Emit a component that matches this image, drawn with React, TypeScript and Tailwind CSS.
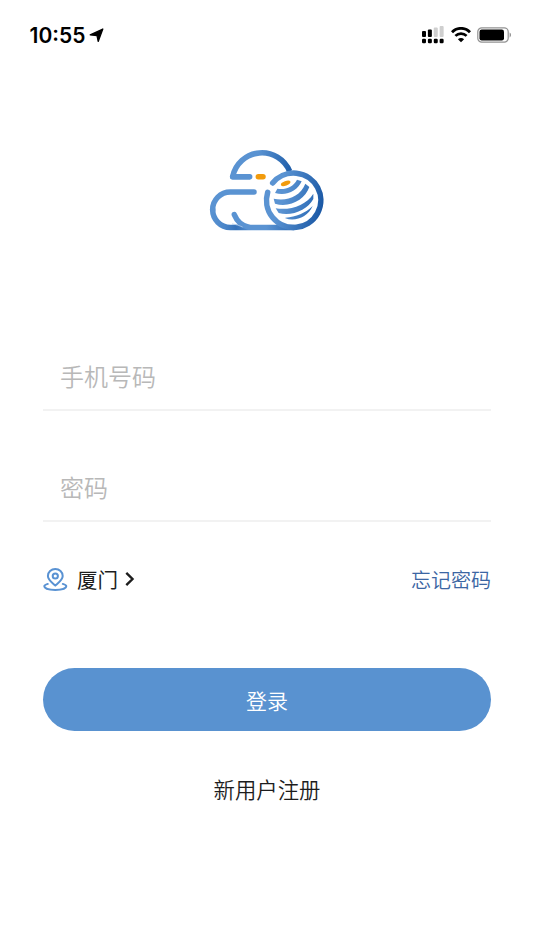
import { useState } from 'react';

const CELL_BARS = [
  { x: 0, y: 6, height: 7, color: '#000' },
  { x: 6, y: 4.5, height: 8.5, color: '#000' },
  { x: 12, y: 2.5, height: 10.5, color: '#cfcfcf' },
  { x: 18, y: 1, height: 12, color: '#cfcfcf' },
];

function StatusBar() {
  return (
    <div className="flex h-[70px] items-center justify-between pr-[22px] pl-[29.500px] text-black">
      <div className="flex items-center gap-[4px] pt-px">
        <span className="font-['Inter','Liberation_Sans',sans-serif] text-[21px] leading-none font-semibold">
          10:55
        </span>
        <svg width="15" height="15" viewBox="0 0 15 15">
          <path d="M13.800 1 9.200 13.400 8 7.600 1.200 6.900Z" fill="#000" stroke="#000" strokeWidth="1.300" strokeLinejoin="round" />
        </svg>
      </div>
      <div className="flex items-center">
        <svg width="22" height="18" viewBox="0 0 22 18">
          {CELL_BARS.map((bar) => (
            <g key={bar.x}>
              <rect x={bar.x * 0.98} y={bar.y - 1} width="4" height={bar.height - 1} rx="1" fill={bar.color} />
              <rect x={bar.x * 0.98} y="12.800" width="4" height="4.400" rx="1.200" fill="#000" />
            </g>
          ))}
        </svg>
        <svg className="ml-[7px]" width="20" height="16" viewBox="0 0 20 16" fill="none" stroke="#000">
          <path d="M1 5.200C6 .1 14 .1 19 5.200" strokeWidth="2.900" />
          <path d="M4.400 8.900c3.200-3.100 8-3.100 11.200 0" strokeWidth="2.700" />
          <path d="M10 15.300 6.900 12.300c1.700-1.600 4.500-1.600 6.200 0Z" fill="#000" stroke="none" />
        </svg>
        <svg className="ml-[6px]" width="35" height="16" viewBox="0 0 35 16">
          <rect x=".8" y=".8" width="30.400" height="14.400" rx="4" fill="none" stroke="#929292" strokeWidth="1.200" />
          <rect x="2.500" y="2.500" width="24.500" height="11" rx="2.200" fill="#000" />
          <path d="M32.600 5.600c1.900.8 1.900 4 0 4.800Z" fill="#929292" />
        </svg>
      </div>
    </div>
  );
}

function Logo() {
  return (
    <svg width="134" height="100" viewBox="0 0 402 300" fill="none">
      <defs>
        <linearGradient id="dome" gradientUnits="userSpaceOnUse" x1="110" y1="60" x2="275" y2="95">
          <stop offset=".35" stopColor="#5a93d2" />
          <stop offset="1" stopColor="#1d5ca8" />
        </linearGradient>
        <linearGradient id="base" gradientUnits="userSpaceOnUse" x1="30" y1="0" x2="290" y2="0">
          <stop offset="0" stopColor="#5a93d2" />
          <stop offset=".17" stopColor="#4b86c9" />
          <stop offset=".3" stopColor="#3471b9" />
          <stop offset=".48" stopColor="#5a93d2" />
          <stop offset=".65" stopColor="#5a93d2" />
          <stop offset="1" stopColor="#2866b0" />
        </linearGradient>
        <linearGradient id="globe" gradientUnits="userSpaceOnUse" x1="195" y1="160" x2="370" y2="195">
          <stop offset=".25" stopColor="#5a93d2" />
          <stop offset="1" stopColor="#1a58a5" />
        </linearGradient>
        <linearGradient id="stripe" gradientUnits="userSpaceOnUse" x1="220" y1="160" x2="345" y2="185">
          <stop offset=".25" stopColor="#5a93d2" />
          <stop offset="1" stopColor="#2f6eb8" />
        </linearGradient>
      </defs>
      <g strokeWidth="16.500" strokeLinecap="round" strokeLinejoin="round">
        <path d="M151 110H98A89.800 89.800 0 0 1 269 94" stroke="url(#dome)" strokeLinecap="butt" />
        <path d="M149 110H98" stroke="#5a93d2" />
        <path d="M38 209a53 53 0 0 0 53 53.500H281" stroke="url(#base)" />
        <path d="M162 156H91a53 53 0 0 0-53 53" stroke="#5a93d2" />
        <path d="M103 224c8 20 24 34 45 38" stroke="#5a93d2" />
        <path d="M218 129A81.500 81.500 0 1 1 203 157" stroke="url(#globe)" />
        <path d="M175 110H189" stroke="#f29b0c" />
      </g>
      <path d="M96 252c12 1 22 5 32 9" stroke="#a9c6e8" strokeWidth="2.500" />
      <ellipse cx="257" cy="130" rx="15" ry="7" transform="rotate(-20 257 130)" fill="#f29b0c" />
      <g fill="url(#stripe)">
        <path d="M232 146C256 150 280 141 291 119L305 124C292 154 258 169 225 159Z" />
        <path d="M221 176C262 184 300 170 316 131L328 141C316 177 270 205 225 191Z" />
        <path d="M227 205C272 212 319 195 340 161L340 177C324 208 275 231 236 219Z" />
        <path d="M256 233C288 231 317 219 338 198C324 231 286 246 256 235Z" />
      </g>
    </svg>
  );
}

function LocationIcon() {
  return (
    <svg className="mt-px" width="25" height="24" viewBox="0 0 25 24" fill="none" stroke="#5992d3" strokeWidth="2" strokeLinecap="round">
      <path d="M12.300 17.600C8.300 14 4.900 11.600 4.900 7.900a7.400 6.900 0 0 1 14.800 0c0 3.700-3.400 6.100-7.400 9.700Z" strokeLinejoin="round" />
      <circle cx="12.300" cy="8" r="2.600" />
      <path d="M4.800 15.900c-2.200.6-3.500 1.300-3.500 2.400 0 2.200 4.700 3.600 11 3.600s11-1.400 11-3.600c0-1.100-1.300-1.800-3.500-2.400" />
    </svg>
  );
}

export default function App() {
  const [phone, setPhone] = useState('');
  const [password, setPassword] = useState('');

  return (
    <div className="h-[950px] w-full overflow-hidden bg-white font-['Noto_Sans_CJK_SC',sans-serif]">
      <StatusBar />

      <div className="flex justify-center pt-[70px]">
        <Logo />
      </div>

      <form className="mt-[103px] mr-[43px] ml-[43px]" onSubmit={(e) => e.preventDefault()}>
        <input
          type="tel"
          value={phone}
          onChange={(e) => setPhone(e.target.value)}
          placeholder="手机号码"
          className="block h-[68px] w-full border-b-2 border-[#f2f2f2] px-[17px] pb-[2px] text-[24px] font-[350] text-[#222] outline-none placeholder:text-[#b8b8b8]"
        />
        <input
          type="password"
          value={password}
          onChange={(e) => setPassword(e.target.value)}
          placeholder="密码"
          className="mt-[43px] block h-[68px] w-full border-b-2 border-[#f2f2f2] px-[17px] pb-[2px] text-[24px] font-[350] text-[#222] outline-none placeholder:text-[#b8b8b8]"
        />

        {/* City picker */}
        <div className="mt-[42px] flex h-[30px] items-center justify-between">
          <button type="button" className="flex items-center text-[20.500px] text-[#1d1d1d]">
            <LocationIcon />
            <span className="ml-[9px]">厦门</span>
            <svg className="ml-[7px]" width="10" height="16" viewBox="0 0 10 16" fill="none" stroke="#1d1d1d" strokeWidth="2.400">
              <path d="m1.300 1.900 6.200 6.100-6.200 6.100" />
            </svg>
          </button>
          <button type="button" className="pt-[2px] text-[20px] font-[350] text-[#3b66a3]">
            忘记密码
          </button>
        </div>

        <button
          type="submit"
          className="mt-[74px] block h-[63px] w-full rounded-full bg-[#5992d0] pt-[2px] text-[21px] font-[350] text-white"
        >
          登录
        </button>
      </form>

      <div className="mt-[42px] flex justify-center">
        <button type="button" className="text-[21.400px] leading-[32px] font-[350] text-[#1d1d1d]">
          新用户注册
        </button>
      </div>
    </div>
  );
}
